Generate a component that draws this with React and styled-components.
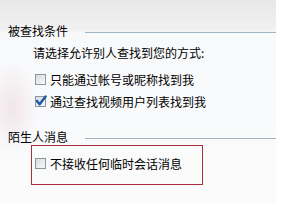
import React from 'react'
import styled, { createGlobalStyle } from 'styled-components'

const GlobalStyle = createGlobalStyle`
    html, body {
        margin: 0;
        padding: 0;
        background: #ffffff;
    }
    body {
        font-family: "Noto Sans CJK SC", "Noto Sans", sans-serif;
        font-size: 12px;
        color: #000000;
    }
`

const Check = ({ checked }) => (
    <CheckBox>
        {checked && (
            <svg width="12" height="12" viewBox="0 0 12 12">
                <path d="M2 6 L4.6 9.3 L10.6 1.4" fill="none" stroke="#1b5aa6" strokeWidth="2.4" strokeLinecap="round" strokeLinejoin="round" />
            </svg>
        )}
    </CheckBox>
)

const Option = ({ checked, children }) => (
    <OptionRow>
        <Check checked={checked} />
        <span>{children}</span>
    </OptionRow>
)

const App = () => {
    return (
        <Page>
            <GlobalStyle />
            <Panel>
                <Header>
                    <Title>被查找条件</Title>
                    <Rule />
                </Header>
                <Prompt>请选择允许别人查找到您的方式:</Prompt>
                <Options>
                    <Option>只能通过帐号或昵称找到我</Option>
                    <Option checked>通过查找视频用户列表找到我</Option>
                </Options>
                <Header $gap={18}>
                    <Title>陌生人消息</Title>
                    <Rule />
                </Header>
                <Highlight>
                    <Option>不接收任何临时会话消息</Option>
                </Highlight>
            </Panel>
            <Edge />
        </Page>
    )
}

const Page = styled.div`
    display: flex;
    width: 282px;
    height: 203px;
    overflow: hidden;
`

const Panel = styled.div`
    width: 276px;
    height: 203px;
    padding-top: 24px;
    box-sizing: border-box;
    display: flex;
    flex-direction: column;
    background:
        radial-gradient(ellipse 26px 48px at 12px 108px, rgba(232, 205, 214, 0.45), rgba(232, 205, 214, 0) 100%),
        linear-gradient(to bottom, #e9e8e9 0px, #f1f1f2 30px, #f8f9fb 33px, #f9fafb 120px, #fbfbfb 203px);
`

const Edge = styled.div`
    flex: 1;
    background: #ffffff;
`

const Header = styled.div`
    display: flex;
    align-items: center;
    height: 14px;
    line-height: 14px;
    margin-top: ${({ $gap }) => ($gap ? `${$gap}px` : '0')};
`

const Title = styled.div`
    width: 77px;
    padding-left: 8px;
    white-space: nowrap;
`

const Rule = styled.div`
    flex: 1;
    height: 1px;
    margin-top: 2px;
    background: #9fb7c4;
`

const Prompt = styled.div`
    margin-top: 4px;
    padding-left: 33px;
    line-height: 22px;
    white-space: nowrap;
`

const Options = styled.div`
    display: flex;
    flex-direction: column;
    margin-top: 4px;
    padding-left: 35px;
`

const OptionRow = styled.div`
    display: flex;
    align-items: center;
    gap: 4px;
    height: 22px;
    white-space: nowrap;
`

const CheckBox = styled.div`
    width: 9px;
    height: 9px;
    border: 1px solid #8e979c;
    background: linear-gradient(135deg, #d8dbde, #f7f8f9);
    display: flex;
    position: relative;

    svg {
        position: absolute;
        left: -1px;
        top: -2px;
    }
`

const Highlight = styled.div`
    margin-top: 1px;
    margin-left: 31px;
    width: 172px;
    height: 40px;
    box-sizing: border-box;
    border: 1px solid #ad2c3a;
    padding: 6px 0 0 3px;
`

export default App
